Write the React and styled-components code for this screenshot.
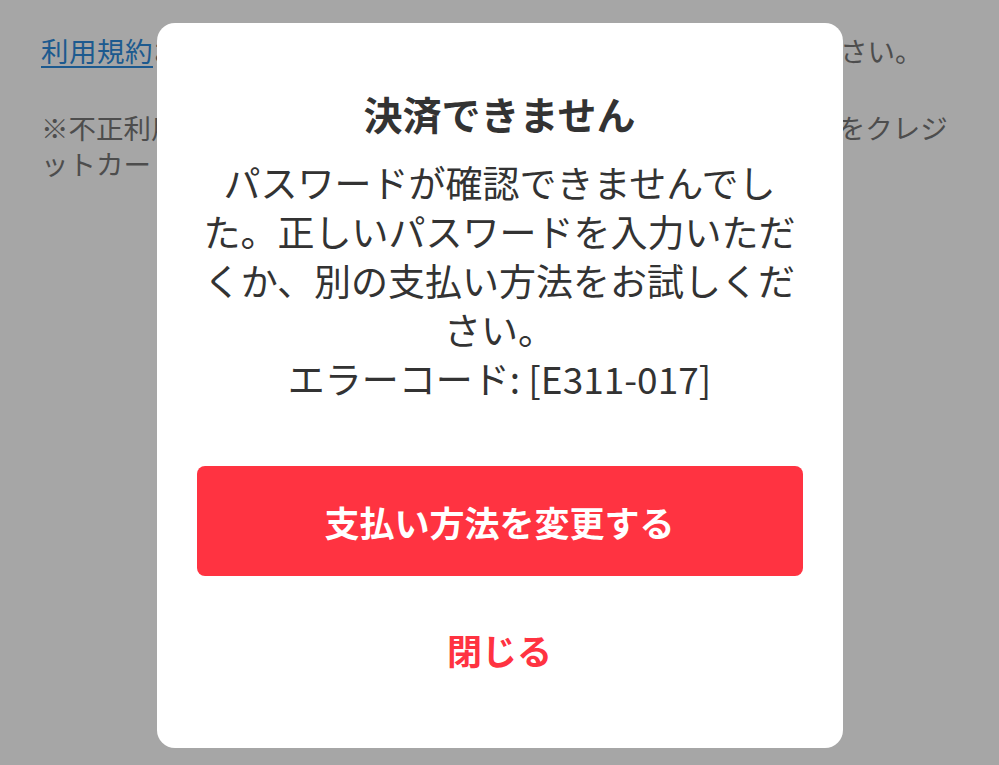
import React from "react";
import styled, { createGlobalStyle } from "styled-components";

const Global = createGlobalStyle`
  html, body { margin: 0; padding: 0; }
  body {
    background: #ffffff;
    font-family: "Noto Sans CJK JP", "Noto Sans", sans-serif;
    width: 999px;
    height: 765px;
    overflow: hidden;
  }
`;

const Page = styled.main`
  position: relative;
  width: 999px;
  height: 765px;
  box-sizing: border-box;
  padding: 32px 41px 0;
  background: #ffffff;
`;

const Paragraph = styled.p`
  margin: 0 0 ${(p) => p.$gap || 0}px;
  font-size: 27.5px;
  line-height: 36px;
  color: #777777;
  line-break: normal;
`;

const TermsLink = styled.a`
  color: #2d8bdc;
  text-decoration: underline;
  text-underline-offset: 4px;
  letter-spacing: 0.5px;
`;

const Overlay = styled.div`
  position: absolute;
  inset: 0;
  background: rgba(0, 0, 0, 0.35);
  display: flex;
  justify-content: center;
  align-items: flex-start;
  padding-top: 23px;
  box-sizing: border-box;
`;

const Dialog = styled.div`
  width: 686px;
  height: 725px;
  box-sizing: border-box;
  background: #ffffff;
  border-radius: 18px;
  padding: 68px 40px 0;
  display: flex;
  flex-direction: column;
  align-items: stretch;
`;

const Title = styled.h2`
  margin: 0;
  text-align: center;
  font-size: 39px;
  line-height: 44px;
  font-weight: 700;
  color: #333333;
`;

const Message = styled.p`
  margin: 23px 0 0;
  text-align: center;
  font-size: 37px;
  line-height: 49px;
  font-weight: 400;
  color: #333333;
`;

const ErrorCode = styled.span`
  display: block;
`;

const Button = styled.button`
  border: none;
  font-family: inherit;
  font-weight: 700;
  font-size: 35px;
  height: 110px;
  border-radius: 8px;
  cursor: pointer;
  background: ${(p) => (p.$primary ? "#ff3341" : "transparent")};
  color: ${(p) => (p.$primary ? "#ffffff" : "#ff3341")};
  margin-top: ${(p) => p.$mt || 0}px;
`;

export default function App() {
  return (
    <>
      <Global />
      <Page>
        <Paragraph $gap={41}>
          <TermsLink href="#">利用規約</TermsLink>
          およびプライバシーポリシーをご確認のうえご利用ください。
        </Paragraph>
        <Paragraph>
          ※不正利用防止のため、ご本人様確認としてパスワード等の入力をクレジットカード会社より求められる場合があります。
        </Paragraph>
        <Overlay>
          <Dialog role="dialog">
            <Title>決済できません</Title>
            <Message>
              パスワードが確認できませんでした。正しいパスワードを入力いただくか、別の支払い方法をお試しください。
              <ErrorCode>エラーコード: [E311-017]</ErrorCode>
            </Message>
            <Button $primary $mt={63}>支払い方法を変更する</Button>
            <Button $mt={18}>閉じる</Button>
          </Dialog>
        </Overlay>
      </Page>
    </>
  );
}
